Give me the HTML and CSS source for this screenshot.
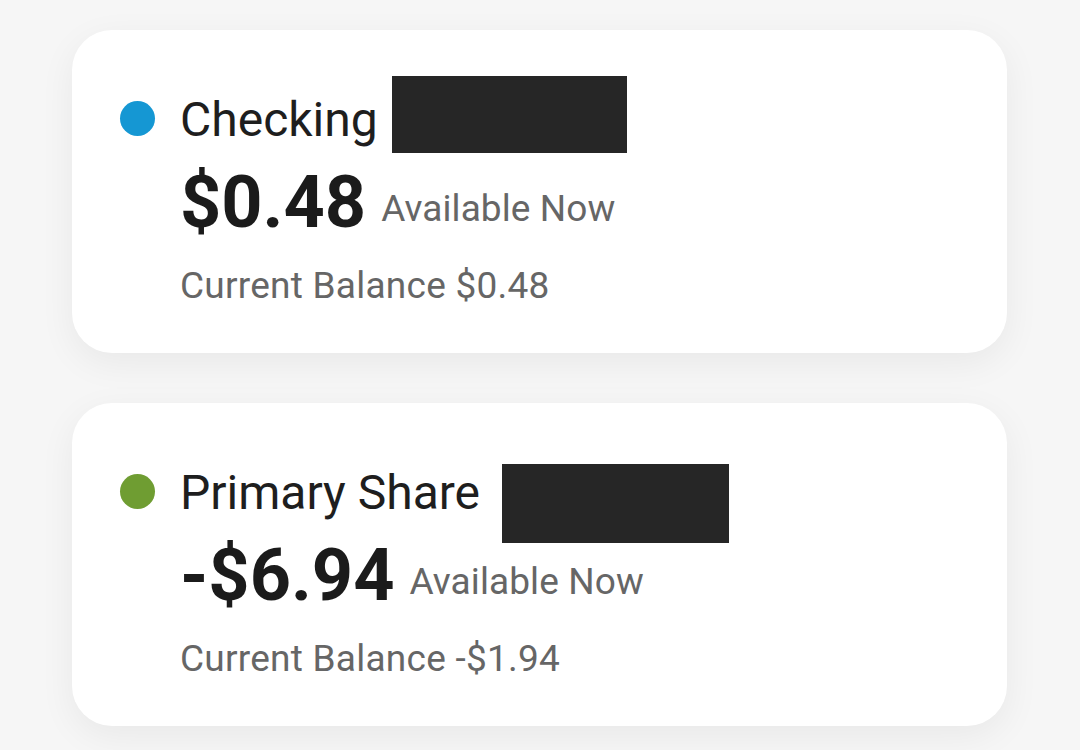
FILE: index.html
```html
<!DOCTYPE html>
<html lang="en">
<head>
<meta charset="utf-8">
<title>Accounts</title>
<link rel="stylesheet" href="styles.css">
</head>
<body>
<main class="accounts">
  <section class="card">
    <div class="title-row">
      <span class="dot dot-blue"></span>
      <span class="name">Checking</span>
      <span class="redact redact-1"></span>
    </div>
    <div class="amount-row">
      <span class="amount">$0.48</span>
      <span class="avail">Available Now</span>
    </div>
    <div class="balance">Current Balance $0.48</div>
  </section>
  <section class="card">
    <div class="title-row">
      <span class="dot dot-green"></span>
      <span class="name">Primary Share</span>
      <span class="redact redact-2"></span>
    </div>
    <div class="amount-row">
      <span class="amount">-$6.94</span>
      <span class="avail">Available Now</span>
    </div>
    <div class="balance">Current Balance -$1.94</div>
  </section>
</main>
</body>
</html>
```
FILE: styles.css
```css
html, body {
  margin: 0;
  padding: 0;
}
body {
  background: #f6f6f6;
  font-family: Roboto, "Liberation Sans", sans-serif;
  width: 1080px;
  height: 750px;
  overflow: hidden;
}
.accounts {
  display: flex;
  flex-direction: column;
  gap: 50px;
  padding: 30px 73px 0 72px;
}
.card {
  background: #ffffff;
  border-radius: 40px;
  box-shadow: 0 10px 36px rgba(0, 0, 0, 0.06);
  padding: 62px 48px 48px 48px;
  height: 323px;
  box-sizing: border-box;
}
.title-row {
  display: flex;
  align-items: center;
  height: 56px;
}
.dot {
  width: 35px;
  height: 35px;
  border-radius: 50%;
  flex: none;
  margin-right: 25px;
  margin-top: -4px;
}
.dot-blue { background: #1597d3; }
.dot-green { background: #6f9d32; }
.name {
  font-size: 48px;
  line-height: 56px;
  color: #1e1e1e;
}
.redact {
  align-self: flex-start;
  background: #262626;
  flex: none;
}
.redact-1 {
  width: 235px;
  height: 77px;
  margin: -16px 0 -25px 14px;
}
.redact-2 {
  width: 227px;
  height: 79px;
  margin: -1px 0 -25px 22px;
}
.amount-row {
  display: flex;
  align-items: flex-end;
  margin-top: 19px;
  height: 72px;
  margin-left: 60px;
}
.amount {
  font-size: 72px;
  line-height: 72px;
  font-weight: 700;
  color: #1b1b1b;
}
.avail {
  font-size: 37px;
  line-height: 37px;
  color: #666666;
  margin-left: 15px;
  margin-bottom: 12px;
  letter-spacing: 0.1px;
}
.balance {
  margin-top: 25px;
  margin-left: 60px;
  font-size: 37px;
  line-height: 44px;
  color: #666666;
  letter-spacing: 0.25px;
}
```
